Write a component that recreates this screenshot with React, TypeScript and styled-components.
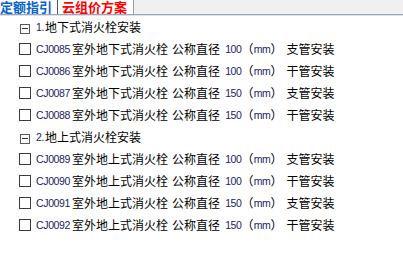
import React from "react";
import styled, { createGlobalStyle } from "styled-components";

const GlobalStyle = createGlobalStyle`
  html, body { margin: 0; padding: 0; background: #ffffff; }
  body {
    font-family: "Noto Sans CJK SC", "Liberation Sans", sans-serif;
    font-size: 12px;
    color: #000;
  }
`;

const Page = styled.div`
  width: 403px;
  height: 261px;
  background: #ffffff;
  overflow: hidden;
`;

const TabStrip = styled.div`
  display: flex;
  height: 14px;
  background: #f0f0f0;
  border-bottom: 1px solid #9ea6b2;
  box-shadow: 0 1px 0 #d8e2ee;
`;

const Tab = styled.div<{ $color: string; $width: number; $pad: number }>`
  width: ${(p) => p.$width}px;
  padding-left: ${(p) => p.$pad}px;
  box-sizing: border-box;
  background: #ffffff;
  border-right: 1px solid ${(p) => (p.$color === "red" ? "#a0a0a0" : "#555")};
  color: ${(p) => (p.$color === "red" ? "#ff0000" : "#0a64c8")};
  font-family: "Noto Sans CJK SC", sans-serif;
  font-weight: 700;
  font-size: 13px;
  line-height: 14px;
  white-space: nowrap;
`;

const TabText = styled.span`
  display: block;
`;

const List = styled.div`
  display: flex;
  flex-direction: column;
  padding-top: 1px;
`;

const Row = styled.div`
  display: flex;
  align-items: center;
  height: 22px;
  padding-left: 19px;
  white-space: nowrap;
  line-height: 14px;
`;

const Checkbox = styled.span`
  display: inline-block;
  width: 12px;
  height: 12px;
  box-sizing: border-box;
  border: 1px solid #3c3c3c;
  background: #fff;
  margin-right: 5px;
  flex: none;
`;

const Expander = styled.span`
  position: relative;
  display: inline-block;
  width: 10px;
  height: 10px;
  box-sizing: border-box;
  border: 1px solid #5a5a5a;
  margin-left: 1px;
  margin-right: 6px;
  margin-top: 3px;
  flex: none;
  &::after {
    content: "";
    position: absolute;
    left: 1px;
    right: 1px;
    top: 3px;
    height: 1px;
    background: #333;
  }
`;

const Latin = styled.span<{ $ml?: number }>`
  font-family: "Liberation Sans", sans-serif;
  font-size: 10.5px;
  letter-spacing: -0.35px;
  color: #1c1c66;
  margin-left: ${(p) => p.$ml ?? 0}px;
`;

const Cjk = styled.span<{ $ml?: number }>`
  font-family: "Noto Sans CJK SC", sans-serif;
  font-size: 12px;
  color: #000;
  margin-left: ${(p) => p.$ml ?? 0}px;
`;

type Item = { code: string; kind: string; dia: string; spec: string };

const groups: { title: string; num: string; items: Item[] }[] = [
  {
    num: "1.",
    title: "地下式消火栓安装",
    items: [
      { code: "CJ0085", kind: "室外地下式消火栓", dia: "100", spec: "支管安装" },
      { code: "CJ0086", kind: "室外地下式消火栓", dia: "100", spec: "干管安装" },
      { code: "CJ0087", kind: "室外地下式消火栓", dia: "150", spec: "支管安装" },
      { code: "CJ0088", kind: "室外地下式消火栓", dia: "150", spec: "干管安装" },
    ],
  },
  {
    num: "2.",
    title: "地上式消火栓安装",
    items: [
      { code: "CJ0089", kind: "室外地上式消火栓", dia: "100", spec: "支管安装" },
      { code: "CJ0090", kind: "室外地上式消火栓", dia: "100", spec: "干管安装" },
      { code: "CJ0091", kind: "室外地上式消火栓", dia: "150", spec: "支管安装" },
      { code: "CJ0092", kind: "室外地上式消火栓", dia: "150", spec: "干管安装" },
    ],
  },
];

export default function App() {
  return (
    <Page>
      <GlobalStyle />
      <TabStrip>
        <Tab $color="blue" $width={58} $pad={0}>
          <TabText>定额指引</TabText>
        </Tab>
        <Tab $color="red" $width={76} $pad={4}>
          <TabText>云组价方案</TabText>
        </Tab>
      </TabStrip>
      <List>
        {groups.map((g) => (
          <React.Fragment key={g.num}>
            <Row>
              <Expander />
              <Latin>{g.num}</Latin>
              <Cjk $ml={1}>{g.title}</Cjk>
            </Row>
            {g.items.map((it) => (
              <Row key={it.code}>
                <Checkbox />
                <Latin>{it.code}</Latin>
                <Cjk $ml={2}>{it.kind}</Cjk>
                <Cjk $ml={4}>公称直径</Cjk>
                <Latin $ml={5}>{it.dia}</Latin>
                <Cjk>（</Cjk>
                <Latin>mm</Latin>
                <Cjk>）</Cjk>
                <Cjk $ml={4}>{it.spec}</Cjk>
              </Row>
            ))}
          </React.Fragment>
        ))}
      </List>
    </Page>
  );
}
